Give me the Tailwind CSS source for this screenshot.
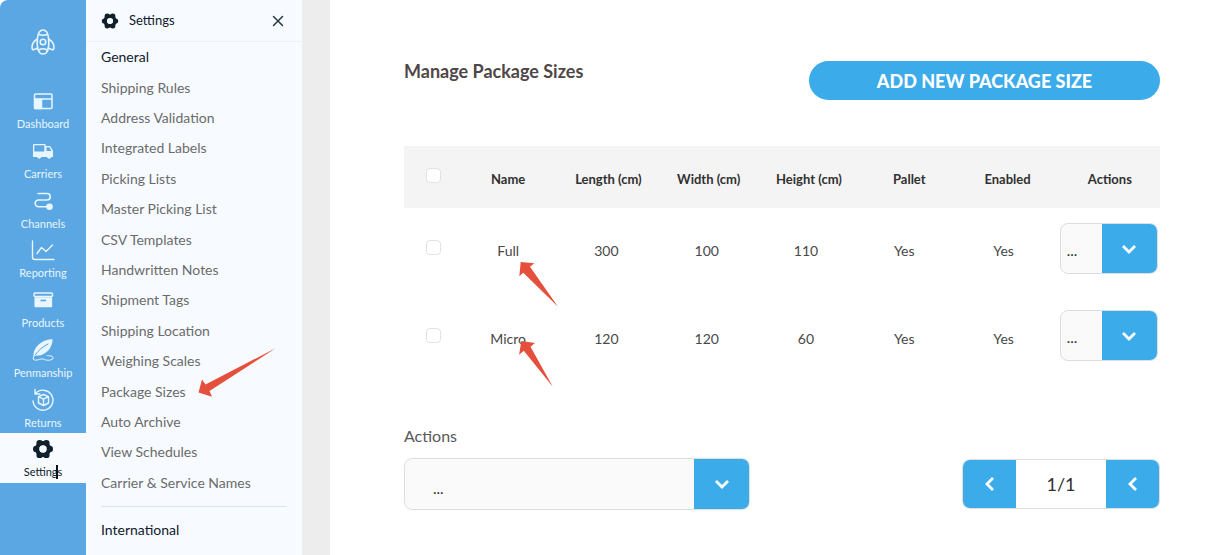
<!DOCTYPE html>
<html lang="en">
  <head>
    <meta charset="utf-8" />
    <meta name="viewport" content="width=device-width, initial-scale=1" />
    <title>Manage Package Sizes</title>
    <script src="https://cdn.jsdelivr.net/npm/@tailwindcss/browser@4"></script>
  </head>
  <body class="flex h-screen overflow-hidden bg-white font-['Lato',sans-serif] text-[#585858]">
    <!-- icon rail -->
    <nav class="w-[86px] shrink-0 overflow-hidden rounded-tl-lg bg-[#5aa7e3] text-[11px] leading-4 text-[#eaf6ff]">
      <a href="#" class="flex h-[85px] justify-center pt-[29px]" aria-label="Home">
        <svg class="h-[26px] w-6" viewBox="0 0 24 26" fill="none" stroke="currentColor" stroke-width="1.6" stroke-linejoin="round">
          <path d="M12 1c3 0 5 3 5.500 8s0 12-2 14.500c-1 2-6 2-7 0-2-2.500-2.500-9.500-2-14.500S9 1 12 1z" />
          <circle cx="12" cy="13" r="2.800" />
          <path d="M8 5.500q4 1.500 8 0M8 21q4-2.500 8 0" />
          <path d="M6.500 10C3 12 1 14.500 1 18c0 2.500 .8 3 2 2.500l4.500-1.500M17.500 10c3.500 2 5.500 4.500 5.500 8 0 2.500-.8 3-2 2.500l-4.500-1.500" />
        </svg>
      </a>
      <div class="flex h-[398px] flex-col">
        <a href="#" class="flex flex-1 flex-col items-center pt-1">
          <svg class="h-6 w-6" viewBox="0 0 24 24" fill="none" stroke="currentColor" stroke-width="1.500">
            <rect x="3.500" y="5" width="17.500" height="14.500" rx="1" />
            <path d="M3.500 10h17.500" />
            <path d="M4 10.500h6.500v9H4z" fill="currentColor" />
          </svg>
          <span class="mt-[3px]">Dashboard</span>
        </a>
        <a href="#" class="flex flex-1 flex-col items-center pt-1">
          <svg class="h-6 w-6" viewBox="0 0 24 24" fill="currentColor">
            <path fill-rule="evenodd" d="M3 5h11.500v2H19l3 4.500V18h-1.500a2.500 2.500 0 0 1-4.500 0h-5.500a2.500 2.500 0 0 1-4.500 0H2V6a1 1 0 0 1 1-1zM3.300 6.300v6.200h10V6.300zM15.500 8.300v3.700h5l-2.200-3.700z" />
            <circle cx="8" cy="17.800" r="1.600" />
            <circle cx="18" cy="17.800" r="1.600" />
          </svg>
          <span class="mt-[3px]">Carriers</span>
        </a>
        <a href="#" class="flex flex-1 flex-col items-center pt-1">
          <svg class="h-6 w-6" viewBox="0 0 24 24" fill="none" stroke="currentColor" stroke-width="1.600" stroke-linecap="round">
            <path d="M7 4.500h9a3.200 3.200 0 0 1 0 6.500H7.500a3.300 3.300 0 0 0 0 6.700H17" />
            <circle cx="18.500" cy="17.700" r="2.500" fill="currentColor" />
          </svg>
          <span class="mt-[3px]">Channels</span>
        </a>
        <a href="#" class="flex flex-1 flex-col items-center pt-1">
          <svg class="h-6 w-6" viewBox="0 0 24 24" fill="none" stroke="currentColor" stroke-width="1.400" stroke-linecap="round" stroke-linejoin="round">
            <path d="M1.500 3v16q0 2.500 2.500 2.500h19" />
            <path d="M6 15.500l4.500-6 4.500 4 6.500-6.500" />
          </svg>
          <span class="mt-[3px]">Reporting</span>
        </a>
        <a href="#" class="flex flex-1 flex-col items-center pt-1">
          <svg class="h-6 w-6" viewBox="0 0 24 24" fill="none" stroke="currentColor" stroke-width="1.500">
            <rect x="3" y="5" width="18.500" height="3.500" rx="1" />
            <path d="M4.200 10h16.200v8.500h-16.200z" fill="currentColor" stroke-linejoin="round" />
            <path d="M9.500 12.500h5.500" stroke="#5aa7e3" stroke-width="1.600" />
          </svg>
          <span class="mt-[3px]">Products</span>
        </a>
        <a href="#" class="flex flex-1 flex-col items-center pt-1">
          <svg class="h-6 w-6" viewBox="0 0 24 24" fill="none" stroke="currentColor" stroke-linecap="round">
            <path d="M2.500 18C2 11 8.500 2 21.500 1 22 9 15 18 6 17.500z" fill="currentColor" stroke="none" />
            <path d="M4 17C8 12 11 9 17 6" stroke="#5aa7e3" />
            <path d="M3.500 16.500L2 21c3 3 8-1 10 0 3 1.500 8 2 10-.5 1-3-4-2.500-6-3" />
          </svg>
          <span class="mt-[3px]">Penmanship</span>
        </a>
        <a href="#" class="flex flex-1 flex-col items-center pt-1">
          <svg class="h-6 w-6" viewBox="0 0 24 24" fill="none" stroke="currentColor" stroke-width="1.400" stroke-linecap="round" stroke-linejoin="round">
            <path d="M4.500 5.500A10 10 0 1 1 2 13M4 1.500v4.500h5" />
            <path d="M12.500 6.500l5 2.200v6.300l-5 2.500-5-2.500V8.700zM7.500 8.700l5 2.500 5-2.500M12.500 11.200v6.300" />
          </svg>
          <span class="mt-[3px]">Returns</span>
        </a>
        <a href="#" class="relative flex flex-1 flex-col items-center bg-[#f7fbff] pt-1 text-[#10202c]">
          <svg class="h-6 w-6" viewBox="0 0 24 24" fill="none" stroke="currentColor">
            <circle cx="12" cy="12" r="5.800" stroke-width="4.400" />
            <path d="M8.600 6.100h.1M15.300 6.100h.1M5.200 12h.1M18.700 12h.1M8.600 17.900h.1M15.300 17.900h.1" stroke-width="6.400" stroke-linecap="round" />
            <circle cx="12" cy="12" r="3.700" fill="#f7fbff" stroke="none" />
          </svg>
          <span class="mt-[3px]">Settings</span>
          <span class="absolute top-8 left-14 h-3.5 w-0.5 bg-[#0a1420]"></span>
        </a>
      </div>
    </nav>

    <!-- settings menu -->
    <aside class="w-[216px] shrink-0 bg-[#f7fbff] text-sm text-[#6b6b6b]">
      <div class="flex h-[42px] items-center border-b border-[#edf2f6] pr-4 pl-[15px] text-[13px] text-[#10202c]">
        <svg class="h-[18px] w-[18px]" viewBox="1 1 22 22" fill="none" stroke="currentColor">
          <circle cx="12" cy="12" r="5.800" stroke-width="4.400" />
          <path d="M8.600 6.100h.1M15.300 6.100h.1M5.200 12h.1M18.700 12h.1M8.600 17.900h.1M15.300 17.900h.1" stroke-width="6.400" stroke-linecap="round" />
          <circle cx="12" cy="12" r="3.700" fill="#f7fbff" stroke="none" />
        </svg>
        <span class="ml-2.5">Settings</span>
        <button type="button" class="ml-auto p-0.5" aria-label="Close">
          <svg class="h-3 w-3" viewBox="0 0 12 12" stroke="#263845" stroke-width="1.500" stroke-linecap="round"><path d="M1.500 1.500l9 9M10.500 1.500l-9 9" /></svg>
        </button>
      </div>
      <ul class="mx-[15px] flex h-[456px] flex-col whitespace-nowrap *:flex *:flex-1 *:items-center">
        <li class="text-[#10202c]">General</li>
        <li><a href="#">Shipping Rules</a></li>
        <li><a href="#">Address Validation</a></li>
        <li><a href="#">Integrated Labels</a></li>
        <li><a href="#">Picking Lists</a></li>
        <li><a href="#">Master Picking List</a></li>
        <li><a href="#">CSV Templates</a></li>
        <li><a href="#">Handwritten Notes</a></li>
        <li><a href="#">Shipment Tags</a></li>
        <li><a href="#">Shipping Location</a></li>
        <li><a href="#">Weighing Scales</a></li>
        <li class="relative">
          <a href="#">Package Sizes</a>
          <svg class="absolute -top-7 left-[97px] h-[50px] w-[78px]" viewBox="198 349 78 50" fill="#e5503c"><path d="M198.500 393.500L202 380.500l3.500 5L276 349l-66.500 43 2.500 5.700z" /></svg>
        </li>
        <li><a href="#">Auto Archive</a></li>
        <li><a href="#">View Schedules</a></li>
        <li><a href="#">Carrier &amp; Service Names</a></li>
      </ul>
      <ul class="mx-[15px] mt-2 border-t border-[#d9e6ef] pt-2 *:flex *:h-[30px] *:items-center">
        <li class="text-[#10202c]">International</li>
        <li><a href="#">Customs</a></li>
      </ul>
    </aside>

    <div class="w-7 shrink-0 bg-[#ededed]"></div>

    <main class="min-w-0 flex-1 pt-[61px] pr-[53px] pl-[74px]">
      <div class="flex items-start justify-between">
        <h1 class="text-lg leading-5 font-bold whitespace-nowrap text-[#4f4747]">Manage Package Sizes</h1>
        <button type="button" class="h-[39px] w-[351px] rounded-full bg-[#3cabea] text-lg font-black text-white">ADD NEW PACKAGE SIZE</button>
      </div>

      <table class="mt-[46px] w-full table-fixed text-center text-sm text-[#484848]">
        <thead>
          <tr class="h-[62px] bg-[#f4f4f4] text-[13px] text-[#303030] *:pt-1 *:font-bold">
            <th class="w-[54px] pl-1">
              <input type="checkbox" aria-label="Select all" class="mx-auto -mt-2 block h-[15px] w-[15px] appearance-none rounded-sm border border-[#e2e2e2] bg-white" />
            </th>
            <th>Name</th>
            <th>Length (cm)</th>
            <th>Width (cm)</th>
            <th>Height (cm)</th>
            <th>Pallet</th>
            <th class="pr-1">Enabled</th>
            <th>Actions</th>
          </tr>
        </thead>
        <tbody>
          <tr class="h-[87px] *:pb-0.5">
            <td class="pl-1">
              <input type="checkbox" aria-label="Select Full" class="mx-auto -mt-1.5 block h-[15px] w-[15px] appearance-none rounded-sm border border-[#e2e2e2] bg-white" />
            </td>
            <td class="relative">
              Full
              <svg class="absolute top-[54px] left-[61px] h-[46px] w-10" viewBox="519 262 40 46" fill="#e5503c"><path d="M520.700 262l13.600 1.300-4.300 3.500 28 40-34.700-34-4 3.500z" /></svg>
            </td>
            <td class="pr-1">300</td>
            <td class="pr-1">100</td>
            <td class="pr-1.5">110</td>
            <td class="pr-2.5">Yes</td>
            <td class="pr-3">Yes</td>
            <td class="pt-[15px] pr-1.5 align-top">
              <div class="relative ml-auto w-[98px]">
                <select aria-label="Actions for Full" class="block h-[51px] w-full appearance-none rounded-lg border border-[#dedede] bg-[#fafafa] pt-1 pl-1.5 text-[15px] text-[#303030]"><option>...</option></select>
                <span class="pointer-events-none absolute inset-y-px right-px flex w-[55px] items-center justify-center rounded-r-[7px] bg-[#3cabea]">
                  <svg class="h-3.5 w-3.5" viewBox="0 0 14 14" fill="none" stroke="#fff" stroke-width="2.800"><path d="M1 4l6 6 6-6" /></svg>
                </span>
              </div>
            </td>
          </tr>
          <tr class="h-[87px]">
            <td class="pl-1">
              <input type="checkbox" aria-label="Select Micro" class="mx-auto -mt-1.5 block h-[15px] w-[15px] appearance-none rounded-sm border border-[#e2e2e2] bg-white" />
            </td>
            <td class="relative">
              Micro
              <svg class="absolute top-[46px] left-[61px] h-[46px] w-9" viewBox="519 341 36 46" fill="#e5503c"><path d="M521.300 341l13.700 2-4.500 3.700 22.300 40-29-36-4.700 4z" /></svg>
            </td>
            <td class="pr-1">120</td>
            <td class="pr-1">120</td>
            <td class="pr-1.5">60</td>
            <td class="pr-2.5">Yes</td>
            <td class="pr-3">Yes</td>
            <td class="pt-[15px] pr-1.5 align-top">
              <div class="relative ml-auto w-[98px]">
                <select aria-label="Actions for Micro" class="block h-[51px] w-full appearance-none rounded-lg border border-[#dedede] bg-[#fafafa] pt-1 pl-1.5 text-[15px] text-[#303030]"><option>...</option></select>
                <span class="pointer-events-none absolute inset-y-px right-px flex w-[55px] items-center justify-center rounded-r-[7px] bg-[#3cabea]">
                  <svg class="h-3.5 w-3.5" viewBox="0 0 14 14" fill="none" stroke="#fff" stroke-width="2.800"><path d="M1 4l6 6 6-6" /></svg>
                </span>
              </div>
            </td>
          </tr>
        </tbody>
      </table>

      <div class="mt-11 flex items-end justify-between">
        <div>
          <label for="bulk-action" class="block text-base leading-5">Actions</label>
          <div class="relative mt-3 w-[346px]">
            <select id="bulk-action" class="block h-[52px] w-full appearance-none rounded-lg border border-[#dedede] bg-[#fafafa] pt-2 pl-7 text-[15px] text-[#303030]"><option>...</option></select>
            <span class="pointer-events-none absolute inset-y-px right-px flex w-[55px] items-center justify-center rounded-r-[7px] bg-[#3cabea]">
              <svg class="h-3.5 w-3.5" viewBox="0 0 14 14" fill="none" stroke="#fff" stroke-width="2.800"><path d="M1 4l6 6 6-6" /></svg>
            </span>
          </div>
        </div>
        <div class="mb-px flex h-[50px] w-[198px] overflow-hidden rounded-lg border border-[#dedede]">
          <button type="button" class="flex w-[53px] items-center justify-center bg-[#3cabea]" aria-label="Previous page">
            <svg class="h-3.5 w-3.5" viewBox="0 0 14 14" fill="none" stroke="#fff" stroke-width="2.800"><path d="M10 1L4 7l6 6" /></svg>
          </button>
          <span class="flex flex-1 items-center justify-center text-lg text-[#303030]">1/1</span>
          <button type="button" class="flex w-[53px] items-center justify-center bg-[#3cabea]" aria-label="Next page">
            <svg class="h-3.5 w-3.5" viewBox="0 0 14 14" fill="none" stroke="#fff" stroke-width="2.800"><path d="M10 1L4 7l6 6" /></svg>
          </button>
        </div>
      </div>
    </main>
  </body>
</html>
